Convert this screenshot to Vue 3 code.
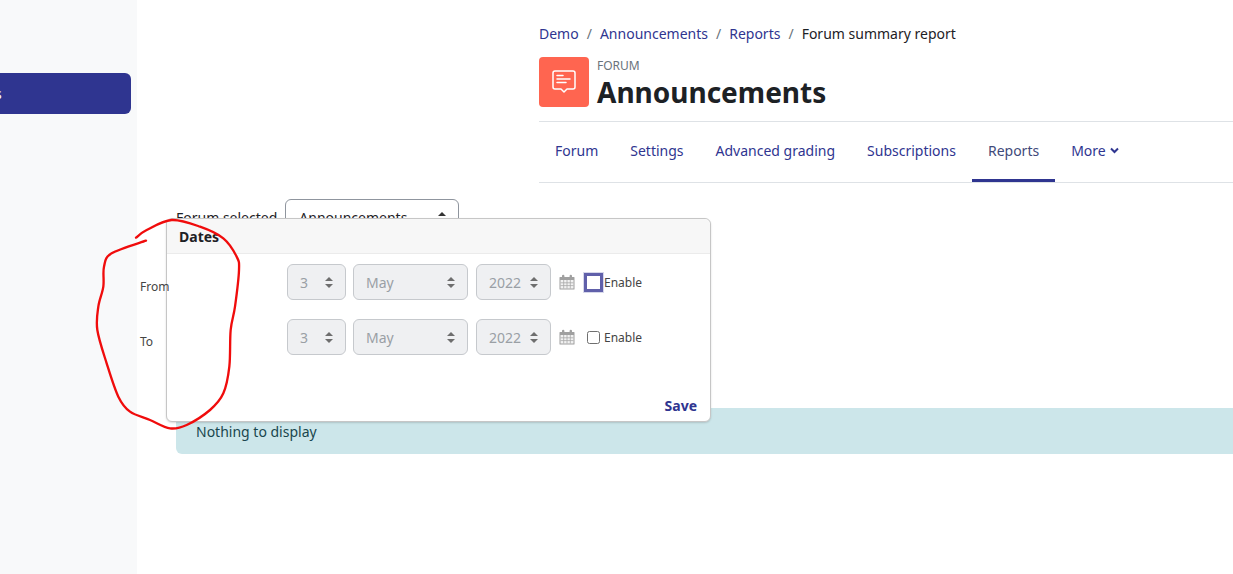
<script setup>
// Forum summary report page with the dates popover open and a hand-drawn ring.
const crumbs = ["Demo", "Announcements", "Reports"];
const tabs = ["Forum", "Settings", "Advanced grading", "Subscriptions", "Reports"];
const dateRows = [
  { label: "From", focused: true },
  { label: "To", focused: false },
];

// Ring points as traced on a 3x crop, smoothed with a Catmull-Rom spline.
const ringPts = [
  [138, 143], [170, 120], [245, 90], [330, 110], [400, 145], [440, 200], [447, 240],
  [435, 350], [422, 420], [418, 530], [400, 610], [360, 660], [290, 705], [240, 715],
  [180, 690], [120, 665], [85, 620], [50, 520], [22, 420], [25, 350], [40, 290],
  [42, 230], [65, 190], [168, 152],
];
function spline(p) {
  let d = `M${p[0][0]} ${p[0][1]}`;
  for (let i = 0; i < p.length - 1; i++) {
    const a = p[i - 1] || p[i];
    const b = p[i];
    const c = p[i + 1];
    const e = p[i + 2] || c;
    d += `C${b[0] + (c[0] - a[0]) / 6} ${b[1] + (c[1] - a[1]) / 6} ${c[0] - (e[0] - b[0]) / 6} ${c[1] - (e[1] - b[1]) / 6} ${c[0]} ${c[1]}`;
  }
  return d;
}
const ringPath = spline(ringPts);
</script>

<template>
  <div class="page">
    <aside class="sidebar">
      <div class="nav-item"><span>s</span></div>
    </aside>

    <main class="main">
      <div class="head">
        <nav class="crumbs">
          <template v-for="c in crumbs" :key="c">
            <a>{{ c }}</a>
            <span class="sep">/</span>
          </template>
          <span class="current">Forum summary report</span>
        </nav>

        <div class="title-row">
          <div class="activity-icon">
            <svg width="26" height="26" viewBox="0 0 26 26" fill="none" stroke="#fff" stroke-width="1.5" stroke-linejoin="round" stroke-linecap="round">
              <path d="M4 2h18a2 2 0 0 1 2 2v14a2 2 0 0 1-2 2h-6l-3 3-3-3H4a2 2 0 0 1-2-2V4a2 2 0 0 1 2-2z" />
              <path d="M6 6.500h6M6 10h13M6 13.500h9" />
            </svg>
          </div>
          <div>
            <div class="kicker">FORUM</div>
            <h1>Announcements</h1>
          </div>
        </div>

        <ul class="tabs">
          <li v-for="t in tabs" :key="t" :class="{ active: t === 'Reports' }">{{ t }}</li>
          <li class="more">
            More
            <svg width="9" height="7" viewBox="0 0 9 7" fill="none" stroke="#2f3590" stroke-width="2"><path d="M1 1.500l3.500 3.500L8 1.500" /></svg>
          </li>
        </ul>
      </div>

      <div class="filter">
        <label>Forum selected</label>
        <div class="filter-select">
          Announcements
          <svg class="sort" width="8" height="11" viewBox="0 0 8 11" fill="#333"><path d="M4 0l4 4H0zM4 11L0 7h8z" /></svg>
        </div>
      </div>

      <div class="alert">Nothing to display</div>
    </main>

    <div class="popover">
      <div class="pop-head">Dates</div>
      <div class="pop-body">
        <div v-for="r in dateRows" :key="r.label" class="date-row">
          <span class="date-label">{{ r.label }}</span>
          <div class="sel sel-day">3<svg class="sort" width="8" height="11" viewBox="0 0 8 11" fill="#6e6e6e"><path d="M4 0l4 4H0zM4 11L0 7h8z" /></svg></div>
          <div class="sel sel-month">May<svg class="sort" width="8" height="11" viewBox="0 0 8 11" fill="#6e6e6e"><path d="M4 0l4 4H0zM4 11L0 7h8z" /></svg></div>
          <div class="sel sel-year">2022<svg class="sort" width="8" height="11" viewBox="0 0 8 11" fill="#6e6e6e"><path d="M4 0l4 4H0zM4 11L0 7h8z" /></svg></div>
          <svg class="cal" width="16" height="16" viewBox="0 0 16 16">
            <path fill="#a0a0a0" d="M1 3h2V2a1.200 1.200 0 0 1 2.400 0v1h5.200V2A1.200 1.200 0 0 1 13 2v1h2a.5.5 0 0 1 .5.5V15a.5.5 0 0 1-.5.5H1a.5.5 0 0 1-.5-.5V3.500A.5.5 0 0 1 1 3z" />
            <path fill="#f2f2f2" d="M1.500 6h13v8.500h-13z" />
            <path stroke="#a8a8a8" stroke-width=".8" d="M1.500 8.800h13M1.500 11.600h13M4.700 6v8.500M8 6v8.500M11.300 6v8.500" />
          </svg>
          <span class="check" :class="{ focused: r.focused }"></span>
          <span class="enable">Enable</span>
        </div>
      </div>
      <div class="pop-foot">Save</div>
    </div>

    <svg class="ring" width="250" height="250" viewBox="0 0 750 750" fill="none">
      <path :d="ringPath" stroke="#f00c0c" stroke-width="7" stroke-linecap="round" stroke-linejoin="round" />
    </svg>
  </div>
</template>

<style scoped>
.page {
  position: relative;
  display: flex;
  width: 1233px;
  height: 574px;
  overflow: hidden;
  background: #fff;
  font-family: "Noto Sans", "Open Sans", sans-serif;
  font-size: 14px;
  color: #1d2125;
}
.sidebar {
  flex: 0 0 137px;
  box-sizing: border-box;
  padding: 73px 6px 0 0;
  background: #f8f9fa;
}
.nav-item {
  display: flex;
  align-items: center;
  height: 41px;
  border-radius: 0 6px 6px 0;
  background: #2f3590;
  color: #fff;
  overflow: hidden;
}
.nav-item span {
  margin-left: -5px;
}
.main {
  flex: 1;
  min-width: 0;
}
.head {
  margin-left: 402px;
  padding-top: 23px;
}
.crumbs {
  display: flex;
  align-items: center;
  height: 20px;
  color: #2f3590;
  white-space: nowrap;
}
.sep {
  margin: 0 8px;
  color: #6a737b;
}
.current {
  color: #1d2125;
}
.title-row {
  display: flex;
  gap: 8px;
  margin-top: 14px;
  height: 64px;
  border-bottom: 1px solid #dee2e6;
}
.activity-icon {
  display: flex;
  align-items: center;
  justify-content: center;
  width: 50px;
  height: 50px;
  border-radius: 4px;
  background: #ff6550;
}
.kicker {
  margin-top: 2px;
  font-size: 12px;
  line-height: 14px;
  color: #6a737b;
}
h1 {
  margin: 1px 0 0;
  font-size: 28px;
  line-height: 36px;
  font-weight: 700;
  white-space: nowrap;
}
.tabs {
  display: flex;
  height: 60px;
  margin: 0;
  padding: 0;
  list-style: none;
  border-bottom: 1px solid #dee2e6;
  color: #2f3590;
}
.tabs li {
  display: flex;
  align-items: center;
  gap: 4px;
  padding: 0 16px 4px;
  white-space: nowrap;
}
.tabs li.active {
  color: #3f4a7a;
  box-shadow: inset 0 -3px 0 #2f3590;
}
.filter {
  display: flex;
  align-items: center;
  gap: 8px;
  margin: 16px 0 0 39px;
  height: 38px;
}
.filter label {
  margin-top: -2px;
}
.filter-select {
  display: flex;
  align-items: center;
  justify-content: space-between;
  box-sizing: border-box;
  width: 174px;
  height: 38px;
  padding: 0 12px 2px 13px;
  border: 1px solid #8f959e;
  border-radius: 6px;
}
.alert {
  box-sizing: border-box;
  height: 46px;
  margin: 171px 0 0 39px;
  padding: 14px 20px;
  border-radius: 6px 0 0 6px;
  background: #cce6ea;
  color: #19464e;
  line-height: 20px;
}
.popover {
  position: absolute;
  left: 166px;
  top: 218px;
  box-sizing: border-box;
  width: 545px;
  height: 204px;
  border: 1px solid #c6c6c6;
  border-radius: 6px;
  background: #fff;
  box-shadow: 0 1px 2px rgba(0, 0, 0, 0.15);
}
.pop-head {
  box-sizing: border-box;
  height: 35px;
  padding: 9px 12px 0;
  border-bottom: 1px solid #ebebeb;
  border-radius: 6px 6px 0 0;
  background: #f7f7f7;
  font-weight: 700;
  line-height: 18px;
}
.pop-body {
  position: relative;
  display: flex;
  flex-direction: column;
  gap: 19px;
  padding: 10px 0 0 120px;
}
.date-row {
  position: relative;
  display: flex;
  align-items: center;
  height: 36px;
}
.date-label {
  position: absolute;
  left: -147px;
  top: 14px;
  font-size: 12px;
  color: #444;
}
.sel {
  display: flex;
  align-items: center;
  justify-content: space-between;
  box-sizing: border-box;
  height: 36px;
  margin-right: 7px;
  padding: 0 12px;
  border: 1px solid #c6c9cd;
  border-radius: 6px;
  background: #eff0f2;
  color: #9a9fa5;
}
.sel-day { width: 59px; }
.sel-month { width: 115px; margin-right: 8px; }
.sel-year { width: 75px; }
.cal {
  margin-left: 1px;
}
.check {
  box-sizing: border-box;
  flex: none;
  width: 13px;
  height: 13px;
  margin-left: 12px;
  border: 1px solid #6f6f6f;
  border-radius: 2.5px;
  background: #fff;
}
.check.focused {
  border-radius: 0;
  border-color: #fff;
  outline: 3px solid #6060aa;
  outline-offset: 0;
  box-shadow: 0 0 0 4px #d6d7ea;
}
.enable {
  margin-left: 4px;
  font-size: 12px;
  color: #444;
}
.pop-foot {
  position: absolute;
  right: 13px;
  bottom: 6px;
  font-weight: 700;
  color: #2f3590;
}
.ring {
  position: absolute;
  left: 90px;
  top: 190px;
}
</style>

<style>
html,
body {
  margin: 0;
}
</style>
